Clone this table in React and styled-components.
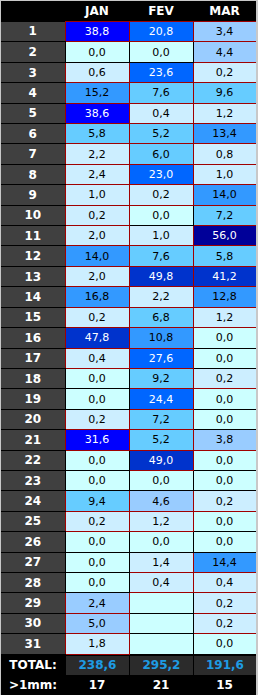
import React from 'react';
import styled, { createGlobalStyle } from 'styled-components';

// daily rain in mm, null = day does not exist in that month
const JAN = [38.8, 0, 0.6, 15.2, 38.6, 5.8, 2.2, 2.36, 1.0, 0.2, 2.0, 14.0, 2.0, 16.8, 0.2, 47.8, 0.4, 0, 0, 0.2, 31.6, 0, 0, 9.4, 0.2, 0, 0, 0, 2.44, 5.0, 1.8];
const FEV = [20.8, 0, 23.6, 7.6, 0.4, 5.2, 6.0, 23.0, 0.2, 0, 1.0, 7.6, 49.8, 2.2, 6.8, 10.8, 27.6, 9.2, 24.4, 7.2, 5.2, 49.0, 0, 4.6, 1.2, 0, 1.4, 0.4, null, null, null];
const MAR = [3.4, 4.4, 0.2, 9.6, 1.2, 13.4, 0.8, 1.0, 14.0, 7.2, 56.0, 5.8, 41.2, 12.8, 1.2, 0, 0, 0.2, 0, 0, 3.8, 0, 0, 0.2, 0, 0, 14.4, 0.4, 0.2, 0.2, 0];

const MONTHS = [
  { name: 'JAN', days: JAN },
  { name: 'FEV', days: FEV },
  { name: 'MAR', days: MAR },
];

const fmt = (v) => (v === null ? '' : v.toFixed(1).replace('.', ','));

const shade = (v) => {
  if (!v) return '#ccffff';
  if (v < 2.4) return '#cceeff';
  if (v <= 5) return '#99ccff';
  if (v <= 10) return '#66ccff';
  if (v <= 20) return '#3399ff';
  if (v <= 30) return '#0066ff';
  if (v <= 40) return '#0000ff';
  if (v <= 50) return '#0033cc';
  return '#000099';
};

const GlobalStyle = createGlobalStyle`
  html, body {
    margin: 0;
    padding: 0;
    background: #000;
  }
  body {
    font-family: "DejaVu Sans", Verdana, sans-serif;
  }
`;

const Frame = styled.div`
  width: 258px;
  height: 695px;
  box-sizing: border-box;
  border-top: 1px solid #c8c8c8;
  border-left: 1px solid #c8c8c8;
  border-right: 2px solid #c8c8c8;
  background: #000;
  overflow: hidden;
`;

const Table = styled.table`
  width: 255px;
  border-collapse: collapse;
  table-layout: fixed;
`;

const HeadCell = styled.th`
  height: 20px;
  padding: 0;
  background: #000;
  color: #fff;
  font-size: 12px;
  font-weight: bold;
  text-align: center;
`;

const DayRow = styled.tr`
  height: 20.42px;
`;

const DayCell = styled.td`
  padding: 0;
  background: #404040;
  color: #fff;
  font-size: 12px;
  font-weight: bold;
  text-align: center;
  border-bottom: 1px solid #000;
`;

const ValueCell = styled.td`
  padding: 0;
  background: ${(p) => p.$bg};
  color: ${(p) => (p.$light ? '#fff' : '#000')};
  border: 1px solid ${(p) => p.$line};
  font-size: 11px;
  text-align: center;
`;

const FootLabel = styled.td`
  height: 20px;
  padding: 0;
  color: #fff;
  font-size: 12px;
  font-weight: bold;
  text-align: center;
`;

const FootCell = styled.td`
  padding: 0;
`;

const TotalBox = styled.div`
  height: 19px;
  margin: 1px 0 0 1px;
  background: #2b2b2b;
  color: #1e9be3;
  font-size: 12px;
  font-weight: bold;
  line-height: 19px;
  text-align: center;
`;

const CountBox = styled.div`
  height: 20px;
  color: #fff;
  font-size: 12px;
  font-weight: bold;
  line-height: 20px;
  text-align: center;
`;

export default function App() {
  return (
    <Frame>
      <GlobalStyle />
      <Table>
        <colgroup>
          <col style={{ width: 64 }} />
          <col style={{ width: 64 }} />
          <col style={{ width: 64 }} />
          <col style={{ width: 63 }} />
        </colgroup>
        <thead>
          <tr>
            <HeadCell />
            {MONTHS.map((m) => (
              <HeadCell key={m.name}>{m.name}</HeadCell>
            ))}
          </tr>
        </thead>
        <tbody>
          {JAN.map((_, i) => (
            <DayRow key={i}>
              <DayCell>{i + 1}</DayCell>
              {MONTHS.map((m) => {
                const v = m.days[i];
                return (
                  <ValueCell
                    key={m.name}
                    $bg={shade(v)}
                    $line={v ? '#a00000' : '#000'}
                    $light={v >= 20}
                  >
                    {fmt(v)}
                  </ValueCell>
                );
              })}
            </DayRow>
          ))}
          <tr>
            <FootLabel>TOTAL:</FootLabel>
            {MONTHS.map((m) => (
              <FootCell key={m.name}>
                <TotalBox>{fmt(m.days.reduce((s, v) => s + (v || 0), 0))}</TotalBox>
              </FootCell>
            ))}
          </tr>
          <tr>
            <FootLabel>&gt;1mm:</FootLabel>
            {MONTHS.map((m) => (
              <FootCell key={m.name}>
                <CountBox>{m.days.filter((v) => v >= 1).length}</CountBox>
              </FootCell>
            ))}
          </tr>
        </tbody>
      </Table>
    </Frame>
  );
}
